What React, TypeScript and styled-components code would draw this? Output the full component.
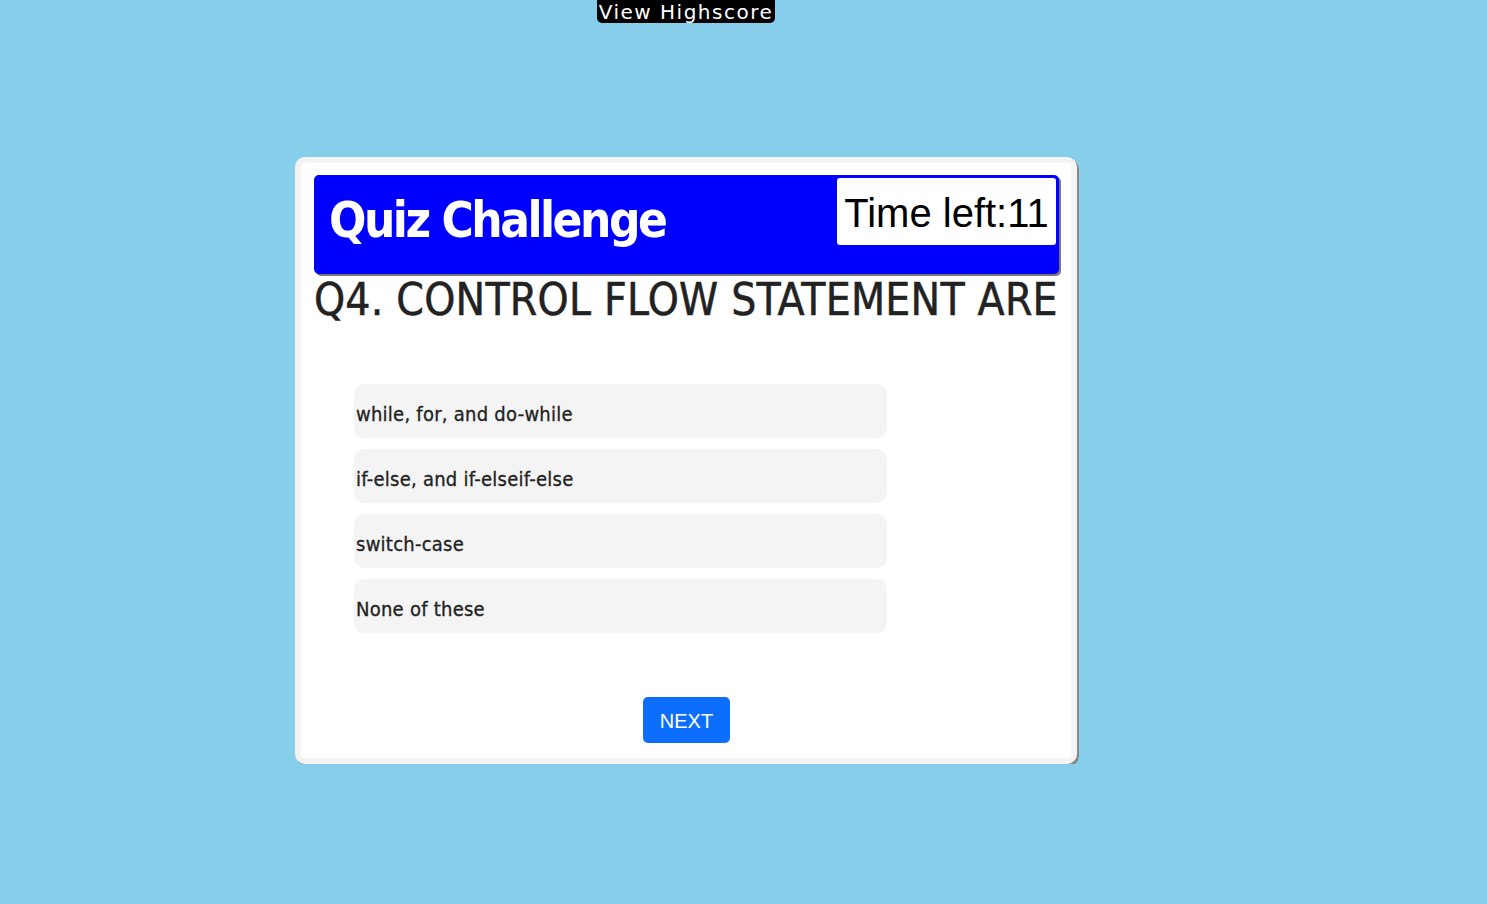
import React from "react";
import styled, { createGlobalStyle } from "styled-components";

const GlobalStyle = createGlobalStyle`
  html, body {
    margin: 0;
    padding: 0;
    background: #87ceeb;
    min-height: 100%;
  }
  body {
    font-family: "DejaVu Sans Condensed", "DejaVu Sans", sans-serif;
  }
`;

const Page = styled.div`
  width: 1372px;
  display: flex;
  flex-direction: column;
  align-items: center;
`;

const HighscoreButton = styled.button`
  margin: 0;
  padding: 0 2px;
  height: 23px;
  background: #000;
  color: #fff;
  border: none;
  border-radius: 0 0 5px 5px;
  font-family: "DejaVu Sans", sans-serif;
  font-size: 20px;
  letter-spacing: 1.5px;
  line-height: 20px;
  cursor: pointer;
`;

const Card = styled.div`
  margin-top: 134px;
  width: 782px;
  box-sizing: border-box;
  background: #fff;
  border: 6px solid #f4f4f4;
  border-radius: 10px;
  box-shadow: 2px 2px 0 #888;
  padding: 12px 12px 15px 13px;
  display: flex;
  flex-direction: column;
`;

const Header = styled.div`
  height: 99px;
  box-sizing: border-box;
  background: #0000ff;
  border-radius: 5px;
  box-shadow: 2px 2px 0 #777;
  display: flex;
  justify-content: space-between;
  align-items: flex-start;
  padding: 3px 3px 0 15px;
`;

const Title = styled.h1`
  margin: 0;
  padding-top: 11px;
  color: #fff;
  font-family: "DejaVu Sans Condensed", "DejaVu Sans", sans-serif;
  font-weight: bold;
  font-size: 49px;
  letter-spacing: -2.5px;
  line-height: 64px;
`;

const Timer = styled.div`
  width: 219px;
  height: 67px;
  box-sizing: border-box;
  background: #fff;
  border-radius: 3px;
  color: #000;
  font-family: "Liberation Sans", Arial, sans-serif;
  font-size: 40px;
  line-height: 70px;
  text-align: center;
`;

const Question = styled.h2`
  margin: 0;
  color: #222;
  font-family: "DejaVu Sans Condensed", "DejaVu Sans", sans-serif;
  font-weight: normal;
  font-size: 44px;
  letter-spacing: 0.22px;
  line-height: 52px;
  text-transform: uppercase;
  white-space: nowrap;
  -webkit-text-stroke: 0.5px #222;
`;

const OptionList = styled.ul`
  list-style: none;
  margin: 58px 0 0 0;
  padding: 0 0 0 40px;
  display: flex;
  flex-direction: column;
  gap: 11px;
`;

const Option = styled.li`
  width: 533px;
  height: 54px;
  box-sizing: border-box;
  background: #f4f4f4;
  border-radius: 10px;
  padding: 5px 0 0 2px;
  display: flex;
  align-items: center;
  color: #222;
  font-family: "DejaVu Sans Condensed", "DejaVu Sans", sans-serif;
  font-size: 20px;
  letter-spacing: 0.25px;
  -webkit-text-stroke: 0.3px #222;
  cursor: pointer;
`;

const Footer = styled.div`
  display: flex;
  justify-content: center;
  margin-top: 64px;
`;

const NextButton = styled.button`
  width: 87px;
  height: 46px;
  background: #0d6efd;
  color: #fff;
  border: none;
  border-radius: 5px;
  font-family: "Liberation Sans", Arial, sans-serif;
  font-size: 20px;
  padding-top: 3px;
  cursor: pointer;
`;

const options = [
  "while, for, and do-while",
  "if-else, and if-elseif-else",
  "switch-case",
  "None of these",
];

export default function App() {
  return (
    <>
      <GlobalStyle />
      <Page>
        <HighscoreButton>View Highscore</HighscoreButton>
        <Card>
          <Header>
            <Title>Quiz Challenge</Title>
            <Timer>Time left:11</Timer>
          </Header>
          <Question>Q4. Control flow statement are</Question>
          <OptionList>
            {options.map((o) => (
              <Option key={o}>{o}</Option>
            ))}
          </OptionList>
          <Footer>
            <NextButton>NEXT</NextButton>
          </Footer>
        </Card>
      </Page>
    </>
  );
}
